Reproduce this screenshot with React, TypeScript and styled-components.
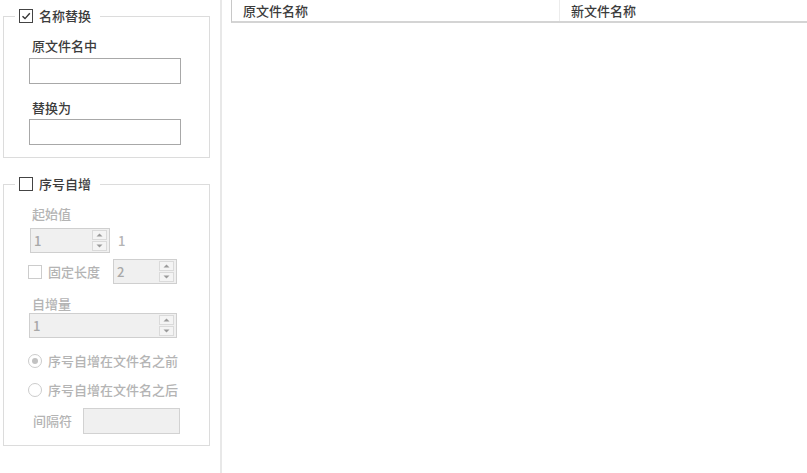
import React from 'react'
import styled, { createGlobalStyle } from 'styled-components'

const GlobalStyle = createGlobalStyle`
  html, body {
    margin: 0;
    padding: 0;
    background: #ffffff;
  }
  body {
    font-family: "Noto Sans CJK SC", "Noto Sans", "Liberation Sans", sans-serif;
    font-size: 13px;
    font-weight: 500;
    color: #3c3c3c;
  }
`

const Page = styled.div`
  display: flex;
  width: 807px;
  height: 473px;
  overflow: hidden;
`

const Sidebar = styled.div`
  width: 220px;
  flex-shrink: 0;
  display: flex;
  flex-direction: column;
  padding: 7px 0 0 3px;
  box-sizing: border-box;
`

const Divider = styled.div`
  width: 2px;
  flex-shrink: 0;
  background: #e8e8e8;
`

const Main = styled.div`
  flex: 1;
  padding-left: 9px;
`

const Group = styled.fieldset<{ $gap?: number }>`
  width: 207px;
  box-sizing: border-box;
  margin: ${p => p.$gap ?? 0}px 0 0 0;
  padding: 0;
  border: 1px solid #dcdcdc;
  min-width: 0;
`

const Legend = styled.legend`
  margin-left: 11px;
  padding: 0 9px 0 4px;
  display: flex;
  align-items: center;
  gap: 6px;
  height: 18px;
  line-height: 18px;
  color: #3c3c3c;
`

const GroupBody = styled.div<{ $top: number; $bottom: number }>`
  display: flex;
  flex-direction: column;
  align-items: flex-start;
  padding: ${p => p.$top}px 0 ${p => p.$bottom}px 25px;
`

const FieldLabel = styled.div<{ $disabled?: boolean; $gap?: number }>`
  height: 18px;
  line-height: 18px;
  padding-left: 3px;
  margin-top: ${p => p.$gap ?? 0}px;
  color: ${p => (p.$disabled ? '#b4b4b4' : '#3c3c3c')};
`

const TextBox = styled.div<{ $gap?: number; $width: number; $disabled?: boolean }>`
  width: ${p => p.$width}px;
  height: 26px;
  box-sizing: border-box;
  margin-top: ${p => p.$gap ?? 0}px;
  border: 1px solid ${p => (p.$disabled ? '#d2d2d2' : '#a8a8a8')};
  background: ${p => (p.$disabled ? '#f0f0f0' : '#ffffff')};
`

const SpinBox = styled.div<{ $width: number }>`
  width: ${p => p.$width}px;
  height: 25px;
  box-sizing: border-box;
  border: 1px solid #cfcfcf;
  background: #f0f0f0;
  display: flex;
  align-items: stretch;
  color: #a8a8a8;
`

const SpinValue = styled.div`
  flex: 1;
  padding-left: 3px;
  line-height: 23px;
`

const Spinner = styled.div`
  width: 15px;
  margin: 1px 2px 1px 0;
  display: flex;
  flex-direction: column;
  gap: 1px;
`

const SpinButton = styled.div`
  flex: 1;
  display: flex;
  align-items: center;
  justify-content: center;
  border: 1px solid #dadada;
  background: #f4f4f4;
`

const Row = styled.div<{ $gap?: number; $spacing?: number; $indent?: number }>`
  display: flex;
  align-items: center;
  gap: ${p => p.$spacing ?? 6}px;
  margin-top: ${p => p.$gap ?? 0}px;
  margin-left: ${p => p.$indent ?? 0}px;
`

const Hint = styled.span`
  color: #b4b4b4;
  margin-left: 8px;
`

const DisabledText = styled.span<{ $width?: number }>`
  color: #b4b4b4;
  line-height: 18px;
  ${p => (p.$width ? `width: ${p.$width}px;` : '')}
`

const Box = styled.span<{ $disabled?: boolean }>`
  width: 14px;
  height: 14px;
  box-sizing: border-box;
  border: 1px solid ${p => (p.$disabled ? '#cccccc' : '#444444')};
  background: #fff;
  display: inline-flex;
  align-items: center;
  justify-content: center;
  flex-shrink: 0;
`

const Radio = styled.span<{ $checked?: boolean }>`
  width: 14px;
  height: 14px;
  box-sizing: border-box;
  border-radius: 50%;
  border: 1px solid #cccccc;
  display: inline-flex;
  align-items: center;
  justify-content: center;
  flex-shrink: 0;
  &::after {
    content: '';
    width: 6px;
    height: 6px;
    border-radius: 50%;
    background: ${p => (p.$checked ? '#c2c2c2' : 'transparent')};
  }
`

const Header = styled.div`
  display: flex;
  height: 23px;
  border-left: 1px solid #c8c8c8;
  border-bottom: 2px solid #d4d4d4;
  box-sizing: border-box;
`

const HeaderCell = styled.div<{ $width?: number }>`
  ${p => (p.$width ? `width: ${p.$width}px; border-right: 1px solid #ececec;` : 'flex: 1;')}
  box-sizing: border-box;
  padding-left: 11px;
  line-height: 21px;
  color: #3c3c3c;
`

const Arrow = ({ up }: { up?: boolean }) => (
  <svg width="7" height="4" viewBox="0 0 7 4">
    <path d={up ? 'M0.5 3.5 L3.5 0.5 L6.5 3.5 Z' : 'M0.5 0.5 L3.5 3.5 L6.5 0.5 Z'} fill="#9a9a9a" />
  </svg>
)

const Check = ({ checked, disabled }: { checked?: boolean; disabled?: boolean }) => (
  <Box $disabled={disabled}>
    {checked && (
      <svg width="10" height="10" viewBox="0 0 10 10">
        <path d="M1.5 5.2 L4 7.6 L8.8 2.2" fill="none" stroke="#333" strokeWidth="1.4" />
      </svg>
    )}
  </Box>
)

const NumberBox = ({ value, width }: { value: string; width: number }) => (
  <SpinBox $width={width}>
    <SpinValue>{value}</SpinValue>
    <Spinner>
      <SpinButton><Arrow up /></SpinButton>
      <SpinButton><Arrow /></SpinButton>
    </Spinner>
  </SpinBox>
)

export default function App() {
  return (
    <>
      <GlobalStyle />
      <Page>
        <Sidebar>
          <Group>
            <Legend>
              <Check checked />
              <span>名称替换</span>
            </Legend>
            <GroupBody $top={12} $bottom={12}>
              <FieldLabel>原文件名中</FieldLabel>
              <TextBox $gap={3} $width={152} />
              <FieldLabel $gap={15}>替换为</FieldLabel>
              <TextBox $gap={2} $width={152} />
            </GroupBody>
          </Group>

          <Group $gap={17}>
            <Legend>
              <Check />
              <span>序号自增</span>
            </Legend>
            <GroupBody $top={12} $bottom={11}>
              <FieldLabel $disabled>起始值</FieldLabel>
              <Row $gap={5} $spacing={0} $indent={1}>
                <NumberBox value="1" width={80} />
                <Hint>1</Hint>
              </Row>
              <Row $gap={6} $indent={-1}>
                <Check disabled />
                <DisabledText $width={59}>固定长度</DisabledText>
                <NumberBox value="2" width={64} />
              </Row>
              <FieldLabel $disabled $gap={11}>自增量</FieldLabel>
              <NumberBox value="1" width={148} />
              <Row $gap={14} $indent={-1}>
                <Radio $checked />
                <DisabledText>序号自增在文件名之前</DisabledText>
              </Row>
              <Row $gap={11} $indent={-1}>
                <Radio />
                <DisabledText>序号自增在文件名之后</DisabledText>
              </Row>
              <Row $gap={9} $spacing={11} $indent={4}>
                <DisabledText>间隔符</DisabledText>
                <TextBox $width={97} $disabled />
              </Row>
            </GroupBody>
          </Group>
        </Sidebar>
        <Divider />
        <Main>
          <Header>
            <HeaderCell $width={328}>原文件名称</HeaderCell>
            <HeaderCell>新文件名称</HeaderCell>
          </Header>
        </Main>
      </Page>
    </>
  )
}
